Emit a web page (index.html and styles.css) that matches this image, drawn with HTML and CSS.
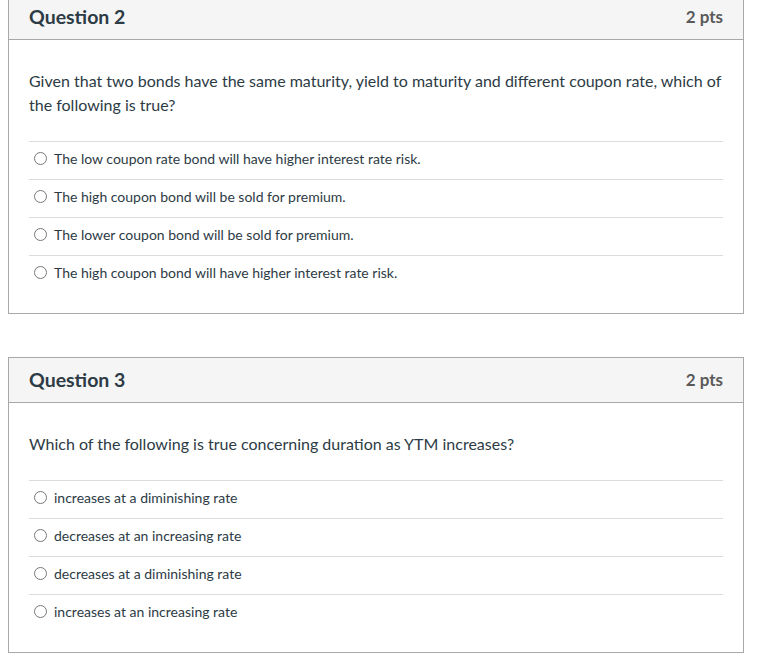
FILE: index.html
```html
<!DOCTYPE html>
<html lang="en">
<head>
    <meta charset="UTF-8">
    <meta name="viewport" content="width=device-width, initial-scale=1.0">
    <title>Quiz</title>
    <link rel="stylesheet" href="styles.css">
</head>
<body>
    <div class="quiz">
        <div class="question">
            <div class="question-header">
                <h2 class="question-title">Question 2</h2>
                <span class="question-points">2 pts</span>
            </div>
            <div class="question-body">
                <p class="question-text">Given that two bonds have the same maturity, yield to maturity and different coupon rate, which of the following is true?</p>
                <div class="answers">
                    <label class="answer"><span class="radio"></span>The low coupon rate bond will have higher interest rate risk.</label>
                    <label class="answer"><span class="radio"></span>The high coupon bond will be sold for premium.</label>
                    <label class="answer"><span class="radio"></span>The lower coupon bond will be sold for premium.</label>
                    <label class="answer"><span class="radio"></span>The high coupon bond will have higher interest rate risk.</label>
                </div>
            </div>
        </div>

        <div class="question">
            <div class="question-header">
                <h2 class="question-title">Question 3</h2>
                <span class="question-points">2 pts</span>
            </div>
            <div class="question-body">
                <p class="question-text">Which of the following is true concerning duration as YTM increases?</p>
                <div class="answers">
                    <label class="answer"><span class="radio"></span>increases at a diminishing rate</label>
                    <label class="answer"><span class="radio"></span>decreases at an increasing rate</label>
                    <label class="answer"><span class="radio"></span>decreases at a diminishing rate</label>
                    <label class="answer"><span class="radio"></span>increases at an increasing rate</label>
                </div>
            </div>
        </div>
    </div>
</body>
</html>
```

FILE: styles.css
```css
* {
    margin: 0;
    padding: 0;
    box-sizing: border-box;
}

body {
    font-family: Lato, 'Open Sans', sans-serif;
    background: white;
    color: #2d3b45;
    margin: 0 8px;
}

.quiz {
    margin-top: -6px;
}

.question {
    width: 736px;
    border: 1px solid #a8a8a8;
    margin-bottom: 43px;
}

.question-header {
    height: 45px;
    background: #f5f5f5;
    border-bottom: 1px solid #a8a8a8;
    display: flex;
    align-items: center;
    justify-content: space-between;
    padding: 0 20px 2px;
}

.question-title {
    font-size: 19.5px;
    font-weight: 700;
    color: #2d3b45;
}

.question-points {
    font-size: 17px;
    font-weight: 700;
    color: #595959;
}

.question-body {
    padding: 29px 20px 20px;
}

.question-text {
    font-size: 16px;
    line-height: 24px;
    margin-bottom: 24px;
}

.answer {
    display: flex;
    align-items: center;
    height: 38px;
    border-top: 1px solid #dcdcdc;
    font-size: 14px;
    padding: 0 0 5px 5px;
}

.radio {
    width: 13px;
    height: 13px;
    border: 1px solid #777;
    border-radius: 50%;
    margin-right: 7px;
    flex-shrink: 0;
}
```
